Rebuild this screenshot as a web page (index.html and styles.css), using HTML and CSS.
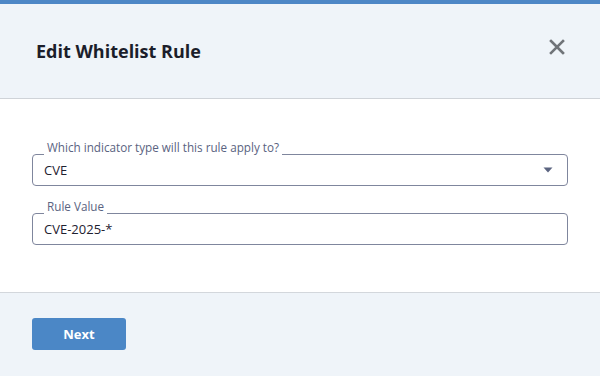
FILE: index.html
```html
<!DOCTYPE html>
<html lang="en">
<head>
<meta charset="utf-8">
<title>Edit Whitelist Rule</title>
<link rel="stylesheet" href="styles.css">
</head>
<body>
<div class="modal">
  <div class="topbar"></div>
  <header class="modal-header">
    <h1 class="modal-title">Edit Whitelist Rule</h1>
    <button class="close-btn" aria-label="Close">
      <svg width="16" height="16" viewBox="0 0 16 16"><path d="M2 2 L14 14 M14 2 L2 14" stroke="#707479" stroke-width="2.6" stroke-linecap="square"/></svg>
    </button>
  </header>
  <main class="modal-body">
    <div class="field">
      <span class="field-label">Which indicator type will this rule apply to?</span>
      <div class="field-value select">
        <span>CVE</span>
        <svg class="caret" width="10" height="6" viewBox="0 0 10 6"><path d="M0.5 0.5 H9.5 L5 5.5 Z" fill="#5b6480"/></svg>
      </div>
    </div>
    <div class="field">
      <span class="field-label">Rule Value</span>
      <div class="field-value"><span>CVE-2025-*</span></div>
    </div>
  </main>
  <footer class="modal-footer">
    <button class="next-btn">Next</button>
  </footer>
</div>
</body>
</html>
```
FILE: styles.css
```css
html, body {
  margin: 0;
  padding: 0;
  background: #ffffff;
}
body {
  font-family: "Open Sans", "Noto Sans", sans-serif;
  width: 600px;
  height: 376px;
  overflow: hidden;
}
.modal {
  display: flex;
  flex-direction: column;
  height: 376px;
}
.topbar {
  height: 4px;
  background: #4d87c6;
}
.modal-header {
  height: 95px;
  box-sizing: border-box;
  background: #eff4f9;
  border-bottom: 1px solid #cfd3d8;
  display: flex;
  align-items: center;
  justify-content: space-between;
  padding: 0 34px 0 36px;
}
.modal-title {
  margin: 0;
  font-size: 18px;
  font-weight: 700;
  color: #1b1e2b;
  line-height: 22px;
}
.close-btn {
  border: 0;
  background: transparent;
  padding: 0;
  width: 18px;
  height: 18px;
  display: flex;
  align-items: center;
  justify-content: center;
  margin-top: -8px;
}
.modal-body {
  height: 194px;
  box-sizing: border-box;
  padding: 55px 32px 0 32px;
  display: flex;
  flex-direction: column;
  gap: 27px;
  border-bottom: 1px solid #d3d7dc;
}
.field {
  position: relative;
  border: 1px solid #7f869d;
  border-radius: 4px;
  height: 32px;
  box-sizing: border-box;
}
.field-label {
  position: absolute;
  top: -15.5px;
  left: 11px;
  padding: 0 3px 4px 3px;
  background: #ffffff;
  font-size: 11.7px;
  line-height: 14px;
  color: #5a6381;
}
.field-value {
  height: 100%;
  display: flex;
  align-items: center;
  justify-content: space-between;
  padding: 0 14px 0 11px;
  font-size: 13px;
  color: #1e2130;
}
.caret {
  display: block;
}
.modal-footer {
  flex: 1;
  background: #eff4f9;
  padding: 25px 32px 0 32px;
}
.next-btn {
  width: 94px;
  height: 32px;
  border: 0;
  border-radius: 3px;
  background: #4b87c6;
  color: #ffffff;
  font-family: "Open Sans", "Noto Sans", sans-serif;
  font-weight: 700;
  font-size: 13px;
  padding: 0;
}
```
